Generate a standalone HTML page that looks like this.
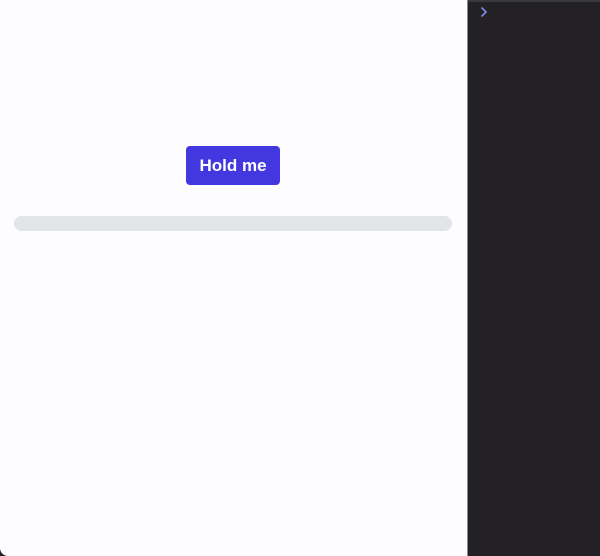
<!DOCTYPE html>
<html><head><style>
html,body{margin:0;padding:0;width:600px;height:556px;overflow:hidden;background:#232124;}
.left{position:absolute;left:0;top:0;width:467px;height:556px;background:#fdfcfe;border-bottom-left-radius:8px;}
.sep{position:absolute;left:467px;top:0;width:1px;height:556px;background:#8a898c;}
.right{position:absolute;left:468px;top:0;width:132px;height:556px;background:#232124;border-top:2px solid #3a393c;box-sizing:border-box;}
.btn{position:absolute;left:186px;top:146px;width:94px;height:39px;background:#4338e0;border-radius:4px;color:#fff;font:bold 17px "Liberation Sans",sans-serif;text-align:center;line-height:39px;}
.bar{position:absolute;left:14px;top:216px;width:438px;height:15px;background:#e2e4e8;border-radius:8px;}
.chev{position:absolute;left:480px;top:6px;}
</style></head><body>
<div class="left"><div class="btn">Hold me</div><div class="bar"></div></div>
<div class="sep"></div>
<div class="right"></div>
<svg class="chev" width="8" height="12" viewBox="0 0 8 12"><path d="M1.5 1.5 L6 6 L1.5 10.5" stroke="#7b8fe8" stroke-width="1.6" fill="none"/></svg>
</body></html>
